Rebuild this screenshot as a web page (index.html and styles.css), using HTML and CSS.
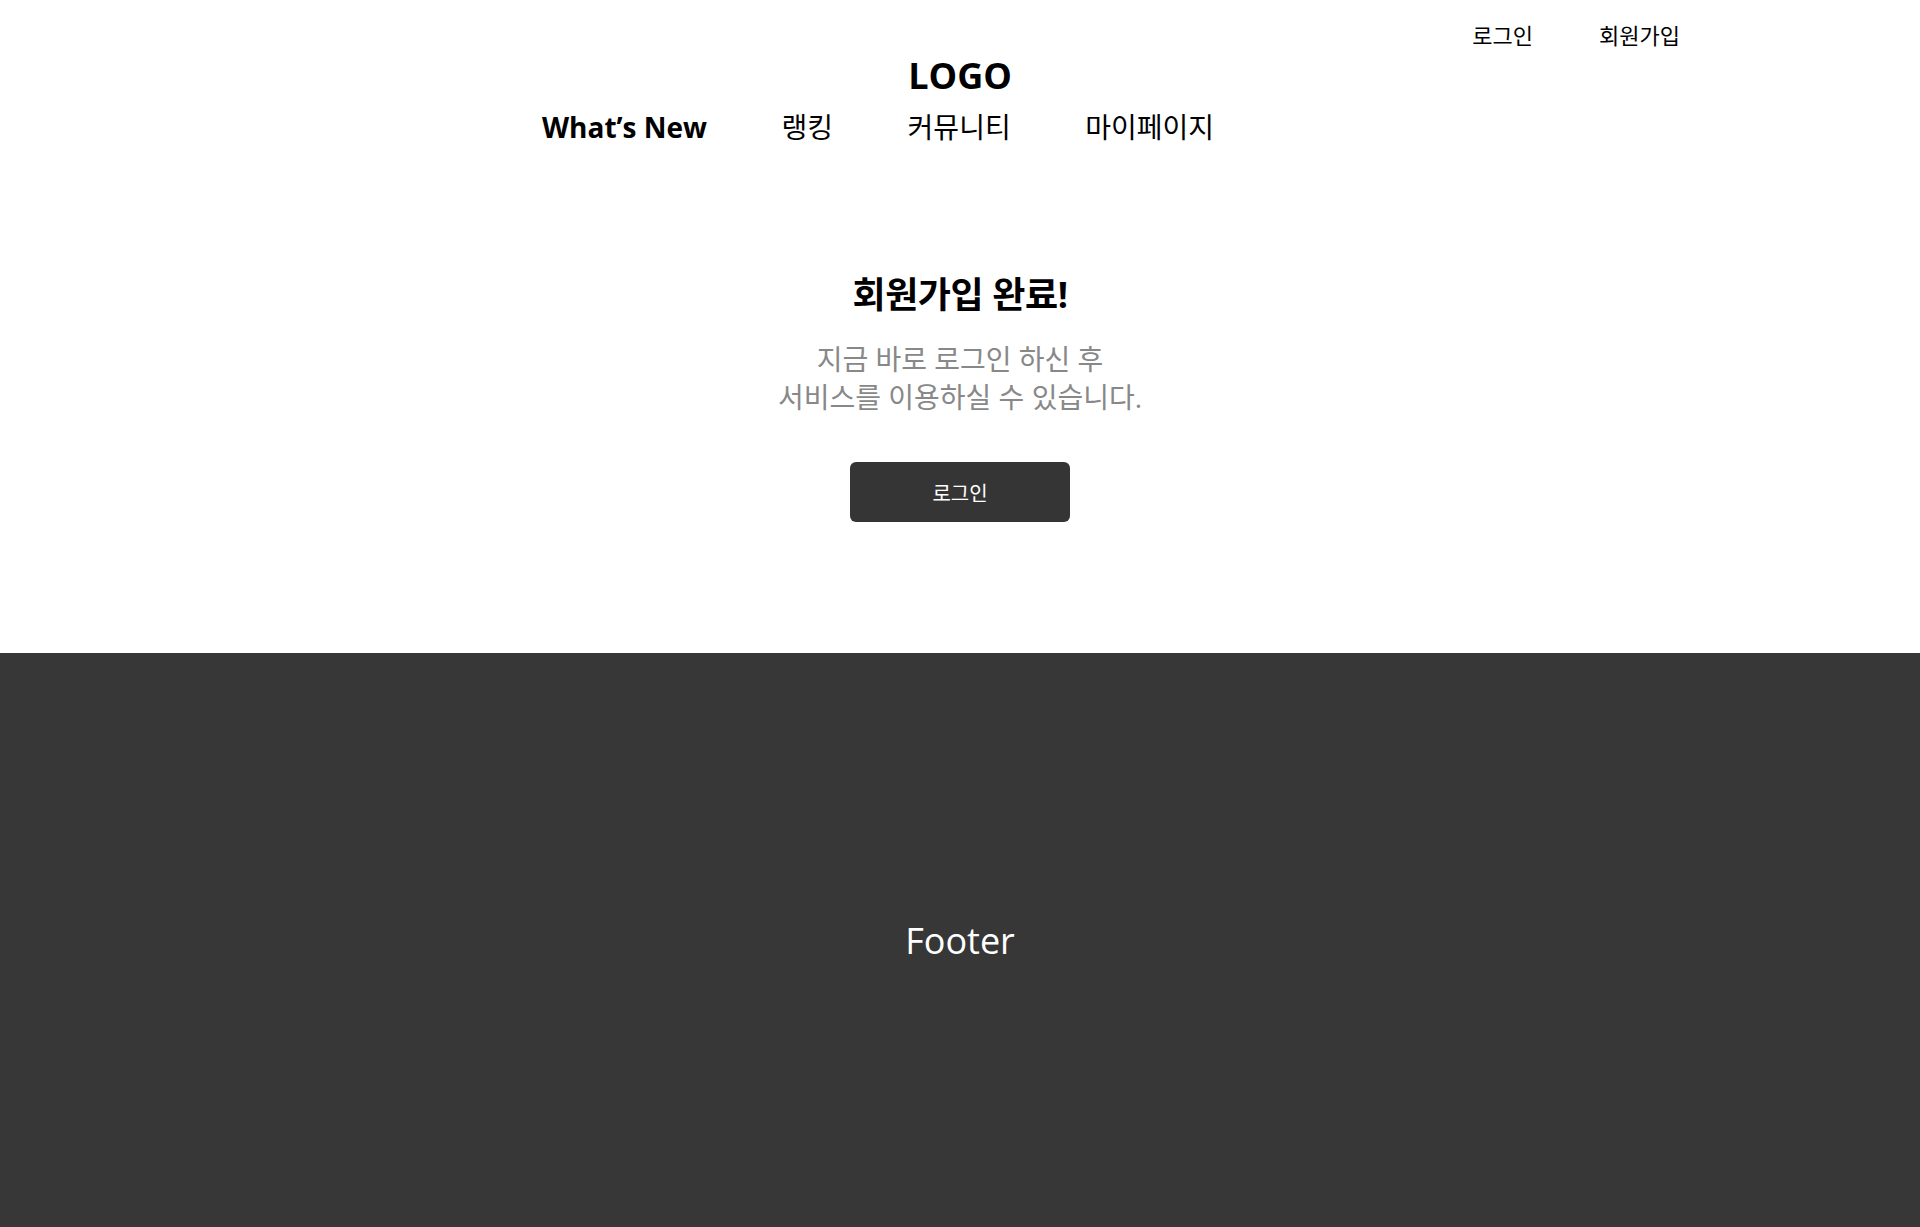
FILE: index.html
```html
<!DOCTYPE html>
<html lang="ko">
<head>
<meta charset="utf-8">
<title>회원가입 완료</title>
<link rel="stylesheet" href="styles.css">
</head>
<body>
<header class="header">
  <div class="util">
    <a class="util-link" href="#">로그인</a>
    <a class="util-link" href="#">회원가입</a>
  </div>
  <h1 class="logo">LOGO</h1>
  <nav class="gnb">
    <a class="gnb-item gnb-en" href="#">What’s New</a>
    <a class="gnb-item gnb-ko" href="#">랭킹</a>
    <a class="gnb-item gnb-ko" href="#">커뮤니티</a>
    <a class="gnb-item gnb-ko" href="#">마이페이지</a>
  </nav>
</header>
<main class="complete">
  <h2 class="complete-title">회원가입 완료!</h2>
  <p class="complete-desc">지금 바로 로그인 하신 후<br>서비스를 이용하실 수 있습니다.</p>
  <a class="btn-login" href="#">로그인</a>
</main>
<footer class="footer">Footer</footer>
</body>
</html>
```
FILE: styles.css
```css
* { box-sizing: border-box; }
html, body { margin: 0; padding: 0; }
body {
  font-family: "Open Sans", "Noto Sans CJK KR", sans-serif;
  color: #000;
  background: #fff;
}
a { color: inherit; text-decoration: none; }

.header {
  width: 1440px;
  margin: 0 auto;
}
.util {
  display: flex;
  justify-content: flex-end;
  gap: 66px;
  padding-top: 20px;
}
.util-link {
  font-size: 22px;
  line-height: 30px;
  color: #000;
}
.logo {
  margin: 4px 0 0;
  font-size: 36px;
  line-height: 44px;
  font-weight: 700;
  text-align: center;
}
.gnb {
  display: flex;
  align-items: center;
  gap: 74.5px;
  padding-left: 302px;
  margin-top: 9px;
}
.gnb-item {
  font-size: 28px;
  line-height: 40px;
}
.gnb-en {
  font-weight: 700;
}
.gnb-ko {
  font-weight: 400;
}

.complete {
  display: flex;
  flex-direction: column;
  align-items: center;
  padding: 124px 0 131px;
}
.complete-title {
  margin: 0;
  font-size: 36px;
  line-height: 48px;
  font-weight: 700;
  letter-spacing: -0.4px;
}
.complete-desc {
  margin: 21px 0 0;
  font-size: 28px;
  line-height: 38px;
  color: #888;
  text-align: center;
}
.btn-login {
  display: flex;
  align-items: center;
  justify-content: center;
  width: 220px;
  height: 60px;
  margin-top: 46px;
  border-radius: 6px;
  background: #353535;
  color: #fff;
  font-size: 20px;
}

.footer {
  display: flex;
  align-items: center;
  justify-content: center;
  height: 574px;
  background: #373737;
  color: #fff;
  font-size: 36px;
}
```
